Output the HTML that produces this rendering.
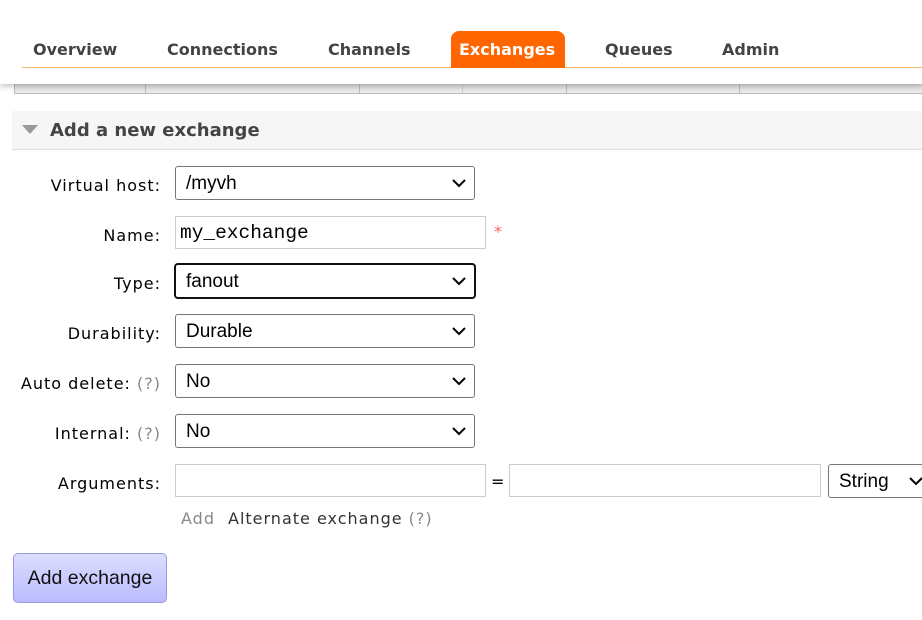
<!DOCTYPE html>
<html><head><style>
body{margin:0;width:922px;height:620px;overflow:hidden;background:#fff;font-family:"DejaVu Sans",Verdana,sans-serif;position:relative}
.abs{position:absolute}
.nav{font-weight:bold;font-size:16px;color:#444;top:40px}
.lbl{font-size:16px;color:#000;right:761px;text-align:right;white-space:nowrap;letter-spacing:1px}
.q{color:#888}
.sel{position:absolute;left:175px;width:298px;height:32px;border:1px solid #767676;border-radius:3px;font-family:"Liberation Sans",Arial,sans-serif;font-size:19px;line-height:34px;text-indent:10px;box-sizing:content-box;background:#fff}
.sel svg{position:absolute;right:8px;top:12px}
.inp{position:absolute;border:1px solid #ccc;height:31px;background:#fff}
</style></head><body>
<div class="abs" style="left:0;top:0;width:922px;height:84px;background:#fff;box-shadow:0 2px 6px rgba(0,0,0,.25);z-index:2"></div>
<div class="abs" style="left:14px;top:84px;width:908px;height:9px;background:linear-gradient(#ddd,#eee);border-bottom:1px solid #bbb"></div>
<div class="abs" style="left:14px;top:84px;width:1px;height:10px;background:#bbb"></div>
<div class="abs" style="left:145px;top:84px;width:1px;height:10px;background:#bbb"></div>
<div class="abs" style="left:359px;top:84px;width:1px;height:10px;background:#bbb"></div>
<div class="abs" style="left:462px;top:84px;width:1px;height:10px;background:#ccc"></div>
<div class="abs" style="left:566px;top:84px;width:1px;height:10px;background:#bbb"></div>
<div class="abs" style="left:739px;top:84px;width:1px;height:10px;background:#bbb"></div>
<div style="position:absolute;z-index:3;left:0;top:0">
<div class="abs" style="left:22px;top:67px;width:900px;height:1px;background:#fbb56e"></div>
<div class="abs" style="left:451px;top:31px;width:114px;height:37px;background:#f60;border-radius:8px 8px 0 0"></div>
<div class="abs nav" style="left:33px">Overview</div>
<div class="abs nav" style="left:167px">Connections</div>
<div class="abs nav" style="left:328px">Channels</div>
<div class="abs nav" style="left:459px;color:#fff">Exchanges</div>
<div class="abs nav" style="left:605px">Queues</div>
<div class="abs nav" style="left:722px">Admin</div>
</div>
<div class="abs" style="left:12px;top:111px;width:910px;height:38px;background:#f6f6f6;border-bottom:1px solid #ddd"></div>
<svg class="abs" style="left:22px;top:125px" width="16" height="10"><path d="M0 0H16L8 9Z" fill="#999"/></svg>
<div class="abs" style="left:50px;top:120px;font-size:18px;font-weight:bold;color:#444">Add a new exchange</div>

<div class="abs lbl" style="top:176px">Virtual host:</div>
<div class="abs lbl" style="top:226px">Name:</div>
<div class="abs lbl" style="top:274px">Type:</div>
<div class="abs lbl" style="top:324px">Durability:</div>
<div class="abs lbl" style="top:374px">Auto delete: <span class="q">(?)</span></div>
<div class="abs lbl" style="top:424px">Internal: <span class="q">(?)</span></div>
<div class="abs lbl" style="top:474px">Arguments:</div>

<div class="sel" style="top:166px">/myvh<svg width="14" height="9"><path d="M1 1L7 7L13 1" stroke="#000" stroke-width="2" fill="none"/></svg></div>
<div class="inp" style="left:175px;top:216px;width:309px;font-family:'Liberation Mono',monospace;font-size:19.5px;line-height:33px;text-indent:4px">my_exchange</div>
<div class="abs" style="left:494px;top:222px;color:#f66;font-size:16px">*</div>
<div class="sel" style="border:2px solid #111;left:174px;top:263px;border-radius:4px">fanout<svg width="14" height="9"><path d="M1 1L7 7L13 1" stroke="#000" stroke-width="2" fill="none"/></svg></div>
<div class="sel" style="top:314px">Durable<svg width="14" height="9"><path d="M1 1L7 7L13 1" stroke="#000" stroke-width="2" fill="none"/></svg></div>
<div class="sel" style="top:364px">No<svg width="14" height="9"><path d="M1 1L7 7L13 1" stroke="#000" stroke-width="2" fill="none"/></svg></div>
<div class="sel" style="top:414px">No<svg width="14" height="9"><path d="M1 1L7 7L13 1" stroke="#000" stroke-width="2" fill="none"/></svg></div>
<div class="inp" style="left:175px;top:464px;width:309px"></div>
<div class="abs" style="left:491px;top:472px;font-size:16px">=</div>
<div class="inp" style="left:509px;top:464px;width:310px"></div>
<div class="sel" style="left:828px;top:464px;width:120px">String<svg style="right:26px" width="14" height="9"><path d="M1 1L7 7L13 1" stroke="#000" stroke-width="2" fill="none"/></svg></div>
<div class="abs" style="left:181px;top:509px;font-size:16px;color:#888;letter-spacing:1px">Add</div>
<div class="abs" style="left:228px;top:509px;font-size:16px;color:#333;letter-spacing:1px">Alternate exchange <span class="q">(?)</span></div>
<div class="abs" style="left:13px;top:553px;width:152px;height:48px;border:1px solid #99d;border-radius:5px;background:linear-gradient(#ddf,#bbf);font-family:'Liberation Sans',Arial,sans-serif;font-size:19.5px;line-height:48px;text-align:center;color:#111">Add exchange</div>
</body></html>
